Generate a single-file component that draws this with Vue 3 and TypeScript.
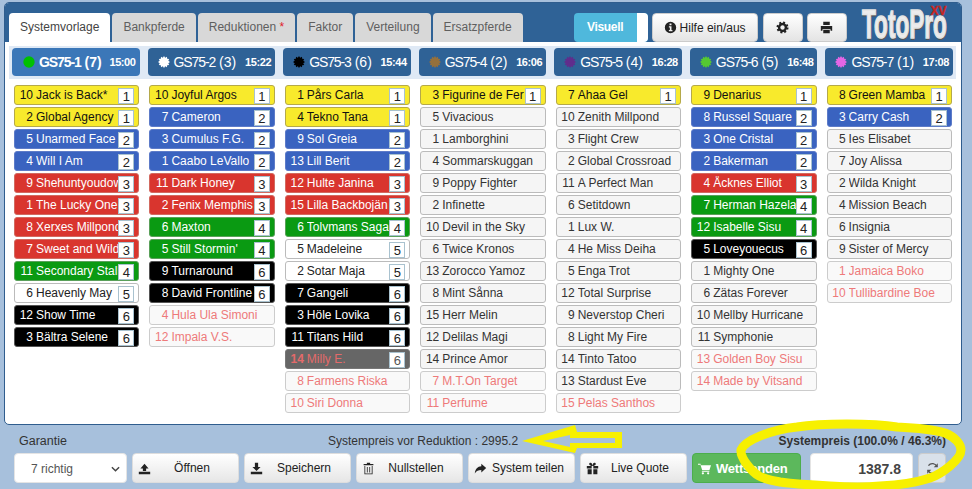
<script setup lang="ts">
type Kind = 'y' | 'b' | 'r' | 'g' | 'w' | 'k' | 'n' | 'o' | 'm'
interface Runner { num: string; name: string; badge: number; kind: Kind }

function parse(spec: string): Runner[] {
  return spec.split('|').map((entry) => {
    const [k, num, name, badge] = entry.split(';')
    return { kind: k as Kind, num, name, badge: Number(badge || 0) }
  })
}

function burst(n: number): string {
  const pts: string[] = []
  for (let i = 0; i < n * 2; i++) {
    const r = i % 2 ? 5.2 : 7
    const a = (i * Math.PI) / n
    pts.push(`${(7 + r * Math.cos(a)).toFixed(2)},${(7 + r * Math.sin(a)).toFixed(2)}`)
  }
  return pts.join(' ')
}
const burstPoints = burst(12)

const races = [
  { code: 'GS75-1', count: '(7)', time: '15:00', color: '#00c000', active: true, runners: parse('y;10;Jack is Back*;1|y;2;Global Agency;1|b;5;Unarmed Face;2|b;4;Will I Am;2|r;9;Shehuntyoudown;3|r;1;The Lucky One;3|r;8;Xerxes Millpond;3|r;7;Sweet and Wild;3|g;11;Secondary Stalker;4|w;6;Heavenly May;5|k;12;Show Time;6|k;3;Bältra Selene;6') },
  { code: 'GS75-2', count: '(3)', time: '15:22', color: '#ffffff', active: false, runners: parse('y;10;Joyful Argos;1|b;7;Cameron;2|b;3;Cumulus F.G.;2|b;1;Caabo LeVallo;2|r;11;Dark Honey;3|r;2;Fenix Memphis;3|g;6;Maxton;4|g;5;Still Stormin\';4|k;9;Turnaround;6|k;8;David Frontline;6|o;4;Hula Ula Simoni;0|o;12;Impala V.S.;0') },
  { code: 'GS75-3', count: '(6)', time: '15:44', color: '#000000', active: false, runners: parse('y;1;Pårs Carla;1|y;4;Tekno Tana;1|b;9;Sol Greia;2|b;13;Lill Berit;2|r;12;Hulte Janina;3|r;15;Lilla Backbojän;3|g;6;Tolvmans Saga;4|w;5;Madeleine;5|w;2;Sotar Maja;5|k;7;Gangeli;6|k;3;Höle Lovika;6|k;11;Titans Hild;6|m;14;Milly E.;6|o;8;Farmens Riska;0|o;10;Siri Donna;0') },
  { code: 'GS75-4', count: '(2)', time: '16:06', color: '#94703c', active: false, runners: parse('y;3;Figurine de Fer;1|n;5;Vivacious;0|n;1;Lamborghini;0|n;4;Sommarskuggan;0|n;9;Poppy Fighter;0|n;2;Infinette;0|n;10;Devil in the Sky;0|n;6;Twice Kronos;0|n;13;Zorocco Yamoz;0|n;8;Mint Sånna;0|n;15;Herr Melin;0|n;12;Delilas Magi;0|n;14;Prince Amor;0|o;7;M.T.On Target;0|o;11;Perfume;0') },
  { code: 'GS75-5', count: '(4)', time: '16:28', color: '#602d8c', active: false, runners: parse('y;7;Ahaa Gel;1|n;10;Zenith Millpond;0|n;3;Flight Crew;0|n;2;Global Crossroad;0|n;11;A Perfect Man;0|n;6;Setitdown;0|n;1;Lux W.;0|n;4;He Miss Deiha;0|n;5;Enga Trot;0|n;12;Total Surprise;0|n;9;Neverstop Cheri;0|n;8;Light My Fire;0|n;14;Tinto Tatoo;0|n;13;Stardust Eve;0|o;15;Pelas Santhos;0') },
  { code: 'GS75-6', count: '(5)', time: '16:48', color: '#55c832', active: false, runners: parse('y;9;Denarius;1|b;8;Russel Square;2|b;3;One Cristal;2|b;2;Bakerman;2|r;4;Åcknes Elliot;3|g;7;Herman Hazelaar;4|g;12;Isabelle Sisu;4|k;5;Loveyouecus;6|n;1;Mighty One;0|n;6;Zätas Forever;0|n;10;Mellby Hurricane;0|n;11;Symphonie;0|o;13;Golden Boy Sisu;0|o;14;Made by Vitsand;0') },
  { code: 'GS75-7', count: '(1)', time: '17:08', color: '#e566e5', active: false, runners: parse('y;8;Green Mamba;1|b;3;Carry Cash;2|n;5;Ies Elisabet;0|n;7;Joy Alissa;0|n;2;Wilda Knight;0|n;4;Mission Beach;0|n;6;Insignia;0|n;9;Sister of Mercy;0|o;1;Jamaica Boko;0|o;10;Tullibardine Boe;0') },
]

const tabs = [
  { label: 'Systemvorlage', active: true, star: false },
  { label: 'Bankpferde', active: false, star: false },
  { label: 'Reduktionen', active: false, star: true },
  { label: 'Faktor', active: false, star: false },
  { label: 'Verteilung', active: false, star: false },
  { label: 'Ersatzpferde', active: false, star: false },
]

const actions = [
  { label: 'Öffnen', d: 'M8 2 L13 8 H10 V11 H6 V8 H3 Z M1 12 H15 V15 H1 Z' },
  { label: 'Speichern', d: 'M6 1 H10 V6 H13 L8 11 L3 6 H6 Z M1 12 H15 V15 H1 Z' },
  { label: 'Nullstellen', d: 'M3 5h1v9h8V5h1v10H3z M6 6h1v7H6z M9 6h1v7H9z M6 1h4v1.5h4V4H2V2.5h4z' },
  { label: 'System teilen', d: 'M9 2 L15 7.5 L9 13 V9.8 C5.5 9.8 3 10.8 1 14 C1.5 8.5 4.5 5.5 9 5.2 Z' },
  { label: 'Live Quote', d: 'M1 5h6v3H1z M9 5h6v3H9z M2 9h5v6H2z M9 9h5v6H9z M8 5 C4 5 3 2 5 1 C7 .5 8 3 8 5 C8 3 9 .5 11 1 C13 2 12 5 8 5Z' },
]
</script>

<template>
  <div class="page">
    <section class="panel">
      <header class="topbar">
        <nav class="tabs">
          <div v-for="t in tabs" :key="t.label" class="tab" :class="{ active: t.active }">
            {{ t.label }}<span v-if="t.star" class="star"> *</span>
          </div>
        </nav>
        <div class="tools">
          <div class="toggle"><span class="toggle-label">Visuell</span><span class="toggle-knob"></span></div>
          <button class="tool help">
            <svg class="ico" viewBox="0 0 16 16"><path fill-rule="evenodd" d="M8 1a7 7 0 1 0 0 14A7 7 0 0 0 8 1z M6.8 3h2.4v2.2H6.8z M6 6.5h3.2V11H10.4v1.6H6V11h1.2V8H6z" /></svg>
            Hilfe ein/aus
          </button>
          <button class="tool square">
            <svg class="ico" viewBox="0 0 16 16"><circle cx="8" cy="8" r="4.2" fill="none" stroke="currentColor" stroke-width="3" /><circle cx="8" cy="8" r="6.2" fill="none" stroke="currentColor" stroke-width="2.4" stroke-dasharray="2.4 2.47" /></svg>
          </button>
          <button class="tool square">
            <svg class="ico" viewBox="0 0 16 16"><path d="M4 1h8v4H4z M1 6h14v6h-2V10H3v2H1z M4 11h8v4H4z" /></svg>
          </button>
        </div>
        <div class="logo"><span class="logo-text">TotoPro</span><span class="logo-xv">XV</span></div>
      </header>

      <div class="body">
        <div class="race-strip">
          <div v-for="r in races" :key="r.code" class="race" :class="{ active: r.active }">
            <svg class="dot" viewBox="0 0 14 14">
              <circle v-if="r.active" cx="7" cy="7" r="6.6" :fill="r.color" />
              <polygon v-else :points="burstPoints" :fill="r.color" />
            </svg>
            <span class="race-name"><span class="race-code">{{ r.code }}</span> {{ r.count }}</span>
            <span class="race-time">{{ r.time }}</span>
          </div>
        </div>
        <div class="columns">
          <div v-for="r in races" :key="r.code" class="col">
            <div v-for="h in r.runners" :key="h.num" class="runner" :class="['k-' + h.kind, { 'has-badge': h.badge }]">
              <span class="num">{{ h.num }}</span>
              <span class="name">{{ h.name }}</span>
              <span v-if="h.badge" class="badge">{{ h.badge }}</span>
            </div>
          </div>
        </div>
      </div>
    </section>

    <footer class="footer">
      <div class="labels">
        <span class="lab-g">Garantie</span>
        <span class="lab-c">Systempreis vor Reduktion : 2995.2</span>
        <span class="lab-r">Systempreis (100.0% / 46.3%)</span>
      </div>
      <div class="controls">
        <div class="select">7 richtig
          <svg class="chev" viewBox="0 0 10 6"><path d="M1 1l4 4 4-4" fill="none" stroke="#444" stroke-width="1.6" /></svg>
        </div>
        <button v-for="a in actions" :key="a.label" class="action">
          <svg class="ico act-ico" viewBox="0 0 16 16"><path fill-rule="evenodd" :d="a.d" /></svg>
          <span class="act-label">{{ a.label }}</span>
        </button>
        <button class="send">
          <svg class="ico" viewBox="0 0 16 16"><path d="M0 2h3l.6 2H16l-2 6H5.2L3 3.4H0z M5 11h9v1H4.5z M6 12.5a1.4 1.4 0 1 1 0 2.8 1.4 1.4 0 0 1 0-2.8z M12.5 12.5a1.4 1.4 0 1 1 0 2.8 1.4 1.4 0 0 1 0-2.8z" /></svg>
          Wettsenden
        </button>
        <div class="price">1387.8</div>
        <button class="refresh">
          <svg class="ico" viewBox="0 0 16 16"><path d="M13.5 6A6 6 0 0 0 3 4.5 M2.5 10A6 6 0 0 0 13 11.5" fill="none" stroke="currentColor" stroke-width="1.6" /><path d="M14.5 1.5v5h-5z M1.5 14.5v-5h5z" /></svg>
        </button>
      </div>
    </footer>

    <svg class="marks" viewBox="0 0 972 489">
      <path fill="none" stroke="#f7f000" stroke-width="9" d="M741 450 C745 440 770 430 797 427 C815 424 835 424 847 424 C870 424 885 425 897 427 C920 428 935 430 945 433 C955 437 961 444 961 450 C961 456 956 461 950 466 C944 471 936 476 930 478 C915 483 900 485 880 486 C860 488 845 487 830 486 C810 485 795 484 780 482 C770 480 764 479 759 476 C752 472 740 458 741 450 Z" />
      <path fill-rule="evenodd" fill="#f7f000" d="M522 441 L575 425 L577 432 L622 432 L622 448 L577 448 L575 453 Z M543 441 L570 435 L570 438 L615 438 L615 443 L570 443 L570 447 Z" />
    </svg>
  </div>
</template>

<style>
html, body { margin: 0; background: #a7c0dc; }
</style>

<style scoped>
.page {
  position: relative;
  width: 972px;
  height: 489px;
  overflow: hidden;
  padding: 2px 10px 0 4px;
  box-sizing: border-box;
  background: #a7c0dc;
  font-family: "Liberation Sans", Arial, sans-serif;
  font-size: 12px;
  color: #333;
}
button { font-family: inherit; margin: 0; }

.panel {
  height: 423px;
  border: 1px solid #2f5d8e;
  border-radius: 5px;
  background: #fff;
  box-sizing: border-box;
  overflow: hidden;
  display: flex;
  flex-direction: column;
}
.topbar {
  height: 39px;
  flex: none;
  background: #2f6296;
  display: flex;
  align-items: flex-end;
  padding-left: 4px;
}
.tabs { display: flex; gap: 2px; }
.tab {
  height: 29px;
  line-height: 28px;
  padding: 0 11px;
  border-radius: 4px 4px 0 0;
  background: #d8d8d8;
  color: #5f5f5f;
  white-space: nowrap;
}
.tab.active { background: #fff; color: #444; }
.star { color: #e0202a; }

.tools {
  display: flex;
  gap: 4px;
  margin-left: 51px;
  align-self: flex-end;
  height: 29px;
}
.toggle {
  width: 74px;
  border-radius: 4px;
  background: #4fb8dc;
  display: flex;
  color: #fff;
  font-weight: bold;
  overflow: hidden;
}
.toggle-label { flex: 1; text-align: center; line-height: 29px; letter-spacing: -0.3px; }
.toggle-knob { width: 11px; background: #fff; border-radius: 0 3px 3px 0; }
.tool {
  border: 1px solid #ccc;
  border-radius: 4px;
  background: linear-gradient(#fff, #e4e4e4);
  color: #222;
  font-size: 12px;
  display: flex;
  align-items: center;
  justify-content: center;
  gap: 3px;
  padding: 0;
}
.help { width: 106px; }
.square { width: 40px; }
.help + .square { margin-left: 1px; }
.ico { width: 13px; height: 13px; fill: currentColor; flex: none; }

.logo {
  position: relative;
  width: 90px;
  height: 38px;
  margin-left: 15px;
  align-self: center;
  margin-top: 3px;
}
.logo-text {
  display: inline-block;
  font-size: 41px;
  line-height: 38px;
  font-weight: bold;
  color: #ececec;
  -webkit-text-stroke: 1.6px #e4e4e4;
  text-shadow: 1px 2px 0 #555;
  transform: scaleX(0.55);
  transform-origin: left center;
  white-space: nowrap;
}
.logo-xv {
  position: absolute;
  left: 69px;
  top: 0;
  font-size: 12px;
  line-height: 12px;
  font-weight: bold;
  -webkit-text-stroke: 0.4px #c22;
  color: #c8281e;
}

.body { flex: 1; padding: 4px 5px 0 4px; display: flex; flex-direction: column; }
.race-strip {
  display: grid;
  grid-template-columns: repeat(7, 1fr);
  gap: 8px;
  background: #dfe9f5;
  padding: 2px 3px 3px;
}
.race {
  height: 28px;
  background: #2f6296;
  border-radius: 4px;
  color: #fff;
  display: flex;
  align-items: center;
  padding: 0 3px 0 10px;
}
.race.active { background: #3b77b8; }
.race.active .race-name { font-weight: bold; }
.race.active .dot { margin-left: 1px; }
.dot { width: 12px; height: 12px; flex: none; margin-right: 4px; }
.race-name { font-size: 14px; white-space: nowrap; }
.race-code { letter-spacing: -1.1px; }
.race-time { margin-left: auto; font-size: 11px; font-weight: bold; padding-right: 1px; letter-spacing: -0.4px; }

.columns {
  display: grid;
  grid-template-columns: repeat(7, 1fr);
  gap: 10px;
  padding: 6px 1px 0 5px;
  margin: 0 3px 0 0;
}
.col { display: flex; flex-direction: column; gap: 2px; min-width: 0; }
.runner {
  height: 20px;
  box-sizing: border-box;
  border: 1px solid #bbb;
  border-radius: 3px;
  display: flex;
  align-items: center;
  padding-left: 4px;
  position: relative;
  white-space: nowrap;
  overflow: hidden;
}
.num { display: inline-block; width: 14px; text-align: right; margin-right: 3px; flex: none; }
.name { overflow: hidden; flex: 1; min-width: 0; }
.has-badge .name { margin-right: 18px; }
.badge {
  position: absolute;
  right: 4px;
  top: 2px;
  width: 14px;
  height: 14px;
  line-height: 15px;
  font-size: 13px;
  text-align: center;
  background: #fff;
  border: 1px solid #a9c2cf;
  color: #222;
}
.k-y { background: #f8ea2c; color: #111; border-color: #b5a94a; }
.k-b { background: #3a63c0; color: #fff; border-color: #5d7bc8; }
.k-r { background: #d9352e; color: #fff; border-color: #d26a60; }
.k-g { background: #0a9a12; color: #fff; border-color: #5aa05a; }
.k-k { background: #000; color: #fff; border-color: #555; }
.k-w { background: #fff; color: #222; border-color: #bbb; }
.k-n { background: #f5f5f5; color: #333; border-color: #bbb; }
.k-o { background: #f9f9f9; color: #ee7a7a; border-color: #ccc; }
.k-m { background: #666; color: #e36a6a; border-color: #777; }
.k-m .num { font-weight: bold; }
.k-m .badge { color: #555; }

.footer { padding-left: 10px; }
.labels { height: 28px; position: relative; display: flex; align-items: center; padding-top: 4px; box-sizing: border-box; }
.lab-g { margin-left: 5px; color: #333; font-size: 12.5px; width: 309px; }
.lab-r { margin-left: auto; font-weight: bold; margin-right: 16px; }
.controls { display: flex; align-items: stretch; height: 30px; gap: 5px; margin-top: 0; }
.select {
  width: 113px;
  box-sizing: border-box;
  background: #fff;
  border-radius: 4px;
  padding-left: 16px;
  line-height: 30px;
  font-size: 12px;
  color: #555;
  position: relative;
  border: 1px solid #e4e4e4;
}
.chev { position: absolute; right: 6px; top: 12px; width: 9px; height: 6px; }
.action {
  width: 107px;
  border: 1px solid #ddd;
  border-radius: 4px;
  background: linear-gradient(#fff, #e6e6e6);
  color: #222;
  font-size: 12px;
  display: flex;
  align-items: center;
  padding: 0 0 0 5px;
}
.act-label { flex: 1; text-align: center; padding-right: 5px; white-space: nowrap; }
.send {
  width: 109px;
  border: 1px solid #4cae4c;
  border-radius: 4px;
  background: #5cb85c;
  color: #fff;
  font-size: 13px;
  font-weight: bold;
  letter-spacing: -0.2px;
  display: flex;
  align-items: center;
  gap: 5px;
  padding: 0 0 0 5px;
}
.price {
  width: 103px;
  box-sizing: border-box;
  margin-left: 4px;
  background: #fff;
  border: 1px solid #e4e4e4;
  border-radius: 4px;
  text-align: right;
  padding-right: 11px;
  line-height: 30px;
  font-size: 14px;
  font-weight: bold;
  color: #444;
}
.refresh {
  width: 28px;
  border: 1px solid #ccc;
  border-radius: 4px;
  background: #d9e1ea;
  color: #555;
  display: flex;
  align-items: center;
  justify-content: center;
  padding: 0;
}
.marks { position: absolute; inset: 0; width: 972px; height: 489px; pointer-events: none; }
</style>
